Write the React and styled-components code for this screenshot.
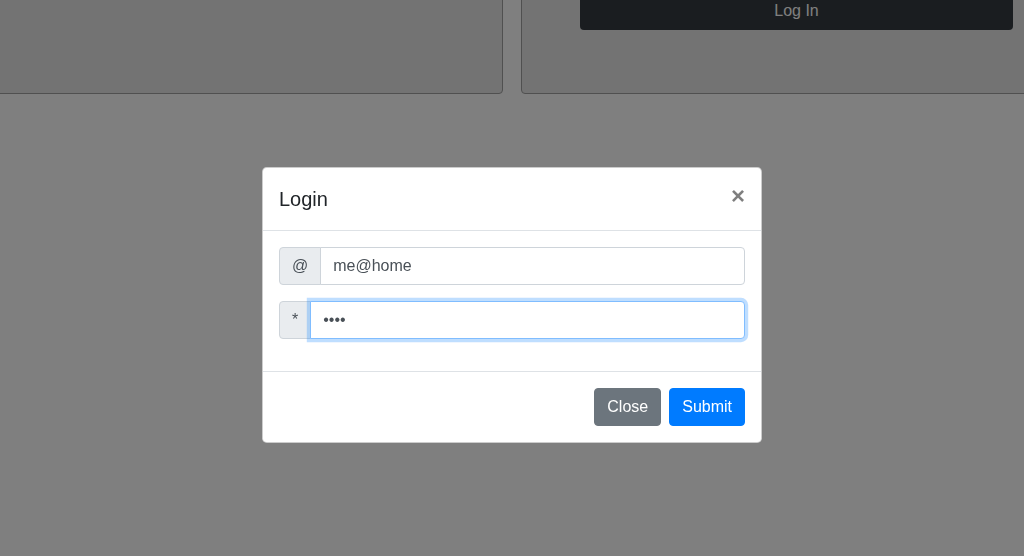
import React from 'react'
import styled, { createGlobalStyle } from 'styled-components'

const GlobalStyle = createGlobalStyle`
  html, body {
    margin: 0;
    padding: 0;
    height: 100%;
    overflow: hidden;
    background: #fff;
    font-family: "Liberation Sans", Helvetica, Arial, sans-serif;
    font-size: 16px;
    line-height: 1.5;
    color: #212529;
  }
  * { box-sizing: border-box; }
`

const Page = styled.main`
  display: grid;
  grid-template-columns: 1fr 1fr;
  gap: 18px;
  margin: -40px -20px 0;
`

const Card = styled.section`
  background: #e6e6e6;
  border: 1px solid #a0a0a0;
  border-radius: 4px;
  padding: 31px ${(p) => p.$padRight || 30}px 62px ${(p) => p.$padLeft || 30}px;
  min-height: 134px;
`

const DarkButton = styled.button`
  display: block;
  width: 100%;
  height: 38px;
  border: 0;
  border-radius: 4px;
  background: #343a40;
  color: #fff;
  font: inherit;
  padding: 6px 12px;
`

const Backdrop = styled.div`
  position: fixed;
  inset: 0;
  background: rgba(0, 0, 0, 0.5);
`

const ModalLayer = styled.div`
  position: fixed;
  inset: 0;
  display: flex;
  justify-content: center;
  align-items: flex-start;
  padding-top: 167px;
`

const Modal = styled.div`
  width: 500px;
  background: #fff;
  border: 1px solid rgba(0, 0, 0, 0.2);
  border-radius: 4.8px;
  display: flex;
  flex-direction: column;
`

const Header = styled.div`
  display: flex;
  align-items: flex-start;
  justify-content: space-between;
  padding: 16px;
  border-bottom: 1px solid #dee2e6;
`

const Title = styled.h5`
  margin: 0;
  font-size: 20px;
  font-weight: 400;
  line-height: 1.5;
`

const CloseX = styled.button`
  margin: -16px -16px -16px auto;
  padding: 16px;
  background: transparent;
  border: 0;
  font-family: inherit;
  font-size: 24px;
  font-weight: 700;
  line-height: 1;
  color: #000;
  opacity: 0.5;
`

const Body = styled.div`
  padding: 16px;
`

const InputGroup = styled.div`
  display: flex;
  margin-bottom: 16px;
`

const Addon = styled.span`
  display: flex;
  align-items: center;
  padding: 6px 12px;
  height: 38px;
  font-size: 16px;
  color: #495057;
  background: #e9ecef;
  border: 1px solid #ced4da;
  border-radius: 4px 0 0 4px;
`

const Field = styled.input`
  flex: 1;
  min-width: 0;
  height: 38px;
  padding: 6px 12px;
  margin-left: -1px;
  font-family: inherit;
  font-size: 16px;
  color: #495057;
  background: #fff;
  border: 1px solid ${(p) => (p.$focused ? '#80bdff' : '#ced4da')};
  border-radius: 0 4px 4px 0;
  outline: 0;
  position: relative;
  z-index: ${(p) => (p.$focused ? 3 : 1)};
  box-shadow: ${(p) => (p.$focused ? '0 0 0 3.2px rgba(0, 123, 255, 0.25)' : 'none')};
`

const Footer = styled.div`
  display: flex;
  justify-content: flex-end;
  align-items: center;
  padding: 12px;
  border-top: 1px solid #dee2e6;
`

const Button = styled.button`
  margin: 4px;
  padding: 6px 12px;
  height: 38px;
  font-family: inherit;
  font-size: 16px;
  line-height: 1.5;
  color: #fff;
  border: 1px solid ${(p) => (p.$variant === 'primary' ? '#007bff' : '#6c757d')};
  background: ${(p) => (p.$variant === 'primary' ? '#007bff' : '#6c757d')};
  border-radius: 4px;
`

export default function App() {
  return (
    <>
      <GlobalStyle />
      <Page>
        <Card />
        <Card $padLeft={58} $padRight={30}>
          <DarkButton>Log In</DarkButton>
        </Card>
      </Page>
      <Backdrop />
      <ModalLayer>
        <Modal>
          <Header>
            <Title>Login</Title>
            <CloseX aria-label="Close">×</CloseX>
          </Header>
          <Body>
            <InputGroup>
              <Addon>@</Addon>
              <Field type="text" value="me@home" readOnly />
            </InputGroup>
            <InputGroup>
              <Addon>*</Addon>
              <Field type="password" value="abcd" readOnly $focused />
            </InputGroup>
          </Body>
          <Footer>
            <Button $variant="secondary">Close</Button>
            <Button $variant="primary">Submit</Button>
          </Footer>
        </Modal>
      </ModalLayer>
    </>
  )
}
